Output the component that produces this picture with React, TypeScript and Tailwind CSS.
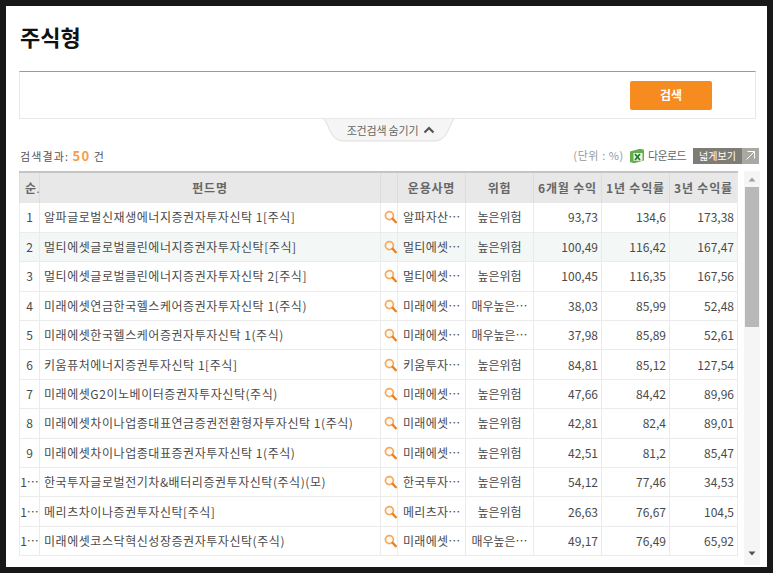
const font = { fontFamily: '"Noto Sans CJK KR", "Liberation Sans", sans-serif' };

const rows = [
  ["1", "알파글로벌신재생에너지증권자투자신탁 1[주식]", "알파자산…", "높은위험", "93,73", "134,6", "173,38"],
  ["2", "멀티에셋글로벌클린에너지증권자투자신탁[주식]", "멀티에셋…", "높은위험", "100,49", "116,42", "167,47"],
  ["3", "멀티에셋글로벌클린에너지증권자투자신탁 2[주식]", "멀티에셋…", "높은위험", "100,45", "116,35", "167,56"],
  ["4", "미래에셋연금한국헬스케어증권자투자신탁 1(주식)", "미래에셋…", "매우높은…", "38,03", "85,99", "52,48"],
  ["5", "미래에셋한국헬스케어증권자투자신탁 1(주식)", "미래에셋…", "매우높은…", "37,98", "85,89", "52,61"],
  ["6", "키움퓨처에너지증권투자신탁 1[주식]", "키움투자…", "높은위험", "84,81", "85,12", "127,54"],
  ["7", "미래에셋G2이노베이터증권자투자신탁(주식)", "미래에셋…", "높은위험", "47,66", "84,42", "89,96"],
  ["8", "미래에셋차이나업종대표연금증권전환형자투자신탁 1(주식)", "미래에셋…", "높은위험", "42,81", "82,4", "89,01"],
  ["9", "미래에셋차이나업종대표증권자투자신탁 1(주식)", "미래에셋…", "높은위험", "42,51", "81,2", "85,47"],
  ["1…", "한국투자글로벌전기차&배터리증권투자신탁(주식)(모)", "한국투자…", "높은위험", "54,12", "77,46", "34,53"],
  ["1…", "메리츠차이나증권투자신탁[주식]", "메리츠자…", "높은위험", "26,63", "76,67", "104,5"],
  ["1…", "미래에셋코스닥혁신성장증권자투자신탁(주식)", "미래에셋…", "매우높은…", "49,17", "76,49", "65,92"],
];

const SearchIcon = () => (
  <svg width="13" height="14" viewBox="0 0 13 14" className="block ml-[3px]">
    <circle cx="5.4" cy="5.6" r="4" fill="#fff8ee" stroke="#f5a95c" strokeWidth="1.7" />
    <path d="M8.6 8.8 L11.8 12.2" stroke="#ee7f1c" strokeWidth="2.4" strokeLinecap="round" />
  </svg>
);

const ExcelIcon = () => (
  <svg width="16" height="16" viewBox="0 0 16 16" className="block">
    <path d="M1 3.5 L11 0.8 L15 1.8 L15 12.5 L5 15.2 L1 14 Z" fill="#62ad4c" />
    <path d="M4.5 5 H13.5 V12.8 H4.5 Z" fill="#eef6e6" />
    <path d="M6 6 L11 12 M11 6 L6 12" stroke="#1f7a2e" strokeWidth="1.8" />
  </svg>
);

const headCell = "border-l border-[#dcdcdc] font-bold text-[#666] text-[12px] tracking-[0.8px] whitespace-nowrap overflow-hidden";
const bodyCell = "border-l border-[#ebebeb] text-[#4a4a4a] text-[12px] whitespace-nowrap overflow-hidden";

export default function App() {
  return (
    <div className="h-[573px] bg-[#181818] p-[6px] overflow-hidden" style={font}>
      <div className="h-[561px] bg-white pl-[13px] overflow-hidden">
        <h1 className="h-[65px] pt-[14px] pl-[1px] text-[22px] leading-[32px] font-bold text-[#111]">주식형</h1>

        {/* search box */}
        <div className="w-[737px] h-[48px] border border-[#e8e8e8] border-t-[#999] flex items-center justify-end pr-[43px]">
          <button className="w-[82px] h-[29px] rounded-[2px] bg-[#f68b1f] text-white text-[12px] font-bold">검색</button>
        </div>

        <div className="w-[737px] flex justify-center">
          <div className="relative w-[132px] h-[23px] ml-[2px] pb-[1px] flex items-center justify-center gap-[5px] text-[11px] text-[#666]">
            <svg width="132" height="23" viewBox="0 0 132 23" className="absolute left-0 top-0">
              <path d="M1 0 C7 8 7 21 20 22 H112 C125 21 125 8 131 0" fill="#f5f5f5" stroke="#dedede" />
            </svg>
            <span className="relative ml-[5px] tracking-[-0.2px]">조건검색 숨기기</span>
            <svg width="12" height="8" viewBox="0 0 12 8" className="relative">
              <path d="M1.5 6.5 L6 2 L10.5 6.5" fill="none" stroke="#555" strokeWidth="2.2" />
            </svg>
          </div>
        </div>

        {/* result summary */}
        <div className="w-[740px] h-[29px] pb-[2px] flex items-center text-[11px]">
          <span className="pl-[1px] text-[#555] tracking-[1.1px]">
            검색결과: <b className="text-[13px] text-[#f79a4a]">50</b> 건
          </span>
          <span className="ml-auto text-[#999] tracking-[0.6px]">(단위 : %)</span>
          <span className="ml-[5px]"><ExcelIcon /></span>
          <span className="ml-[3px] text-[#666] tracking-[-0.6px]">다운로드</span>
          <div className="ml-[7px] h-[16px] w-[66px] flex bg-[#7e7c75] text-white text-[10px] leading-[16px]">
            <span className="w-[49px] text-center">넓게보기</span>
            <span className="flex-1 bg-[#a9a8a2] flex items-center justify-center">
              <svg width="11" height="11" viewBox="0 0 11 11">
                <path d="M2.5 1.5 H9.5 V8.5 M9.5 1.5 L1.5 9.5" fill="none" stroke="#fff" strokeWidth="1" />
              </svg>
            </span>
          </div>
        </div>

        <div className="flex">
          <table className="w-[718px] h-[384px] table-fixed border-collapse border-b border-r border-[#ebebeb] self-start">
            <colgroup>
              <col className="w-[20px]" />
              <col className="w-[341px]" />
              <col className="w-[17px]" />
              <col className="w-[68px]" />
              <col className="w-[68px]" />
              <col className="w-[68px]" />
              <col className="w-[68px]" />
              <col className="w-[68px]" />
            </colgroup>
            <thead>
              <tr className="h-[31px] bg-[#e8e8e8] border-t-2 border-[#c4c4c4]">
                <th className={`${headCell} text-left pl-[5px]`}>순<span className="text-[8px] tracking-normal">.</span></th>
                <th className={headCell}>펀드명</th>
                <th className={headCell}></th>
                <th className={headCell}>운용사명</th>
                <th className={headCell}>위험</th>
                <th className={headCell}>6개월 수익</th>
                <th className={headCell}>1년 수익률</th>
                <th className={headCell}>3년 수익률</th>
              </tr>
            </thead>
            <tbody>
              {rows.map((r, i) => (
                <tr key={i} className={`h-[29.4px] border-b border-[#ebebeb] ${i === 1 ? "bg-[#f3f8f7]" : "bg-white"}`}>
                  <td className={`${bodyCell} text-center`}>{r[0]}</td>
                  <td className={`${bodyCell} pl-[4px] tracking-[0.55px]`}>{r[1]}</td>
                  <td className={bodyCell}><SearchIcon /></td>
                  <td className={`${bodyCell} pl-[5px] tracking-[0.3px]`}>{r[2]}</td>
                  <td className={`${bodyCell} text-center`}>{r[3]}</td>
                  <td className={`${bodyCell} text-right pr-[3px]`}>{r[4]}</td>
                  <td className={`${bodyCell} text-right pr-[3px]`}>{r[5]}</td>
                  <td className={`${bodyCell} text-right pr-[3px]`}>{r[6]}</td>
                </tr>
              ))}
            </tbody>
          </table>

          {/* scrollbar */}
          <div className="ml-[6px] w-[16px] h-[394px] bg-[#f5f5f5] flex flex-col">
            <div className="h-[16px] flex items-center justify-center">
              <svg width="8" height="5" viewBox="0 0 8 5"><path d="M4 0.5 L7.5 4.5 H0.5 Z" fill="#a0a0a0" /></svg>
            </div>
            <div className="w-[14px] h-[140px] mx-auto bg-[#b8b8b8]"></div>
            <div className="mt-auto mb-[4px] h-[16px] flex items-center justify-center">
              <svg width="8" height="5" viewBox="0 0 8 5"><path d="M0.5 0.5 H7.5 L4 4.5 Z" fill="#555" /></svg>
            </div>
          </div>
        </div>
      </div>
    </div>
  );
}
